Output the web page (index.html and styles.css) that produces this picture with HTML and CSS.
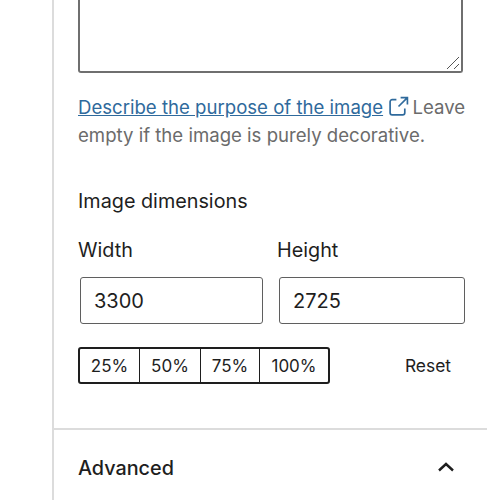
FILE: index.html
```html
<!DOCTYPE html>
<html lang="en">
<head>
    <meta charset="UTF-8">
    <meta name="viewport" content="width=device-width, initial-scale=1.0">
    <title>Image settings</title>
    <link rel="stylesheet" href="styles.css">
</head>
<body>
    <div class="sidebar">
        <div class="panel">
            <div class="alt-box">
                <svg class="grip" width="14" height="14" viewBox="0 0 14 14">
                    <path d="M1 13 L13 1 M8 13 L13 8" stroke="#555" stroke-width="1" fill="none"/>
                </svg>
            </div>
            <p class="help">
                <a href="#">Describe the purpose of the image</a>
                <svg class="ext" width="21" height="21" viewBox="0 0 20 20">
                    <path d="M8 3.5 H4 A2 2 0 0 0 2 5.5 V16 A2 2 0 0 0 4 18 H14 A2 2 0 0 0 16 16 V12 M10 10 L18 2 M12 1.5 H18.5 V8" stroke="#2f6a9c" stroke-width="1.6" fill="none"/>
                </svg>
                <span>Leave</span>
                <span>empty if the image is purely decorative.</span>
            </p>
            <div class="dim-title">Image dimensions</div>
            <div class="dim-row">
                <div class="field">
                    <label for="width">Width</label>
                    <input type="text" id="width" value="3300">
                </div>
                <div class="field">
                    <label for="height">Height</label>
                    <input type="text" id="height" value="2725">
                </div>
            </div>
            <div class="scale-row">
                <div class="scale-group">
                    <button class="scale scale-25">25%</button>
                    <button class="scale scale-50">50%</button>
                    <button class="scale scale-75">75%</button>
                    <button class="scale scale-100">100%</button>
                </div>
                <button class="reset">Reset</button>
            </div>
        </div>
        <div class="advanced">
            <span>Advanced</span>
            <svg width="24" height="24" viewBox="0 0 24 24">
                <path d="M5 14.5 L12 8 L19 14.5" stroke="#1e1e1e" stroke-width="2.4" fill="none"/>
            </svg>
        </div>
    </div>
</body>
</html>
```

FILE: styles.css
```css
html, body {
    margin: 0;
    padding: 0;
    background-color: white;
}
body {
    font-family: Inter, "Liberation Sans", sans-serif;
    color: #1e1e1e;
    height: 500px;
    overflow: hidden;
}
.sidebar {
    margin-left: 52px;
    border-left: 2px solid #dcdcdc;
    height: 500px;
}
.panel {
    padding: 0 0 0 24px;
    height: 430px;
    box-sizing: border-box;
    border-bottom: 2px solid #dcdcdc;
}
.alt-box {
    position: relative;
    height: 73px;
    width: 385px;
    box-sizing: border-box;
    border: 2px solid #6f6f6f;
    border-top: none;
    border-radius: 0 0 3px 3px;
}
.grip {
    position: absolute;
    right: 1px;
    bottom: 1px;
}
.help {
    margin: 20px 0 0;
    width: 390px;
    font-size: 18.6px;
    line-height: 28px;
    color: #6b6b6b;
}
.help a {
    color: #2f6a9c;
    text-decoration: underline;
}
.ext {
    vertical-align: -3px;
    margin-right: -2px;
}
.dim-title {
    margin-top: 38px;
    font-size: 19.8px;
    line-height: 28px;
}
.dim-row {
    display: flex;
    gap: 16px;
    margin-top: 21px;
    margin-left: 2px;
}
.field label {
    display: block;
    margin-left: -2px;
    margin-bottom: 13px;
    font-size: 19.8px;
    line-height: 28px;
}
.field input {
    display: block;
    width: 183px;
    height: 47px;
    box-sizing: border-box;
    padding: 0 13px;
    border: 1px solid #5f5f5f;
    border-radius: 3px;
    font-family: inherit;
    font-size: 20px;
    color: #1e1e1e;
}
.field + .field input {
    width: 186px;
}
.scale-row {
    display: flex;
    align-items: center;
    justify-content: space-between;
    width: 385px;
    margin-top: 23px;
}
.scale-group {
    display: flex;
    box-sizing: border-box;
    height: 37px;
    border: 2px solid #1e1e1e;
    border-radius: 3px;
}
.scale {
    padding: 0;
    border: none;
    border-left: 1px solid #1e1e1e;
    background: none;
    font-family: inherit;
    font-size: 17px;
    color: #1e1e1e;
}
.scale:first-child {
    border-left: none;
}
.scale-25 { width: 59px; }
.scale-50 { width: 61px; }
.scale-75 { width: 59px; }
.scale-100 { width: 69px; }
.reset {
    padding: 0;
    margin-right: 12px;
    border: none;
    background: none;
    font-family: inherit;
    font-size: 17.4px;
    color: #1e1e1e;
}
.advanced {
    display: flex;
    align-items: center;
    justify-content: space-between;
    padding: 24px 29px 0 24px;
    font-size: 19.8px;
    font-weight: 500;
    line-height: 28px;
}
```
